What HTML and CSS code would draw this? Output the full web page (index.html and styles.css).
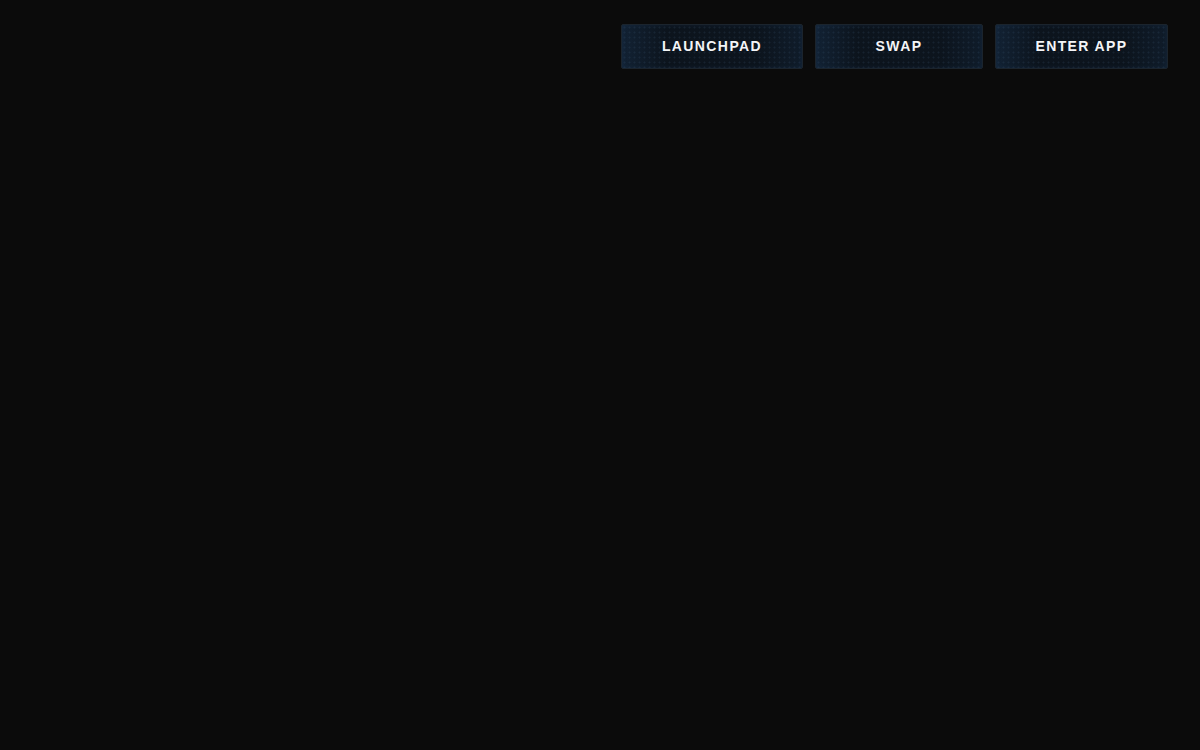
FILE: index.html
```html
<!DOCTYPE html>
<html>
<head>
<meta charset="utf-8">
<link rel="stylesheet" href="styles.css">
</head>
<body>
<header class="topbar">
  <nav class="nav">
    <a class="btn btn-launchpad">LAUNCHPAD</a>
    <a class="btn btn-swap">SWAP</a>
    <a class="btn btn-enter">ENTER APP</a>
  </nav>
</header>
</body>
</html>
```
FILE: styles.css
```css
html, body {
  margin: 0;
  padding: 0;
  background: #0b0b0b;
  height: 100%;
}
body {
  font-family: "Liberation Sans", Arial, sans-serif;
}
.topbar {
  display: flex;
  justify-content: flex-end;
  padding: 24px 32px 0 0;
}
.nav {
  display: flex;
  gap: 12px;
}
.btn {
  box-sizing: border-box;
  height: 45px;
  padding-bottom: 2px;
  display: flex;
  align-items: center;
  justify-content: center;
  color: #f4f5f7;
  font-weight: 700;
  font-size: 14px;
  letter-spacing: 1.4px;
  border: 1px solid #1b242d;
  border-radius: 2px;
  background-color: #0c141d;
  background-image:
    radial-gradient(circle, rgba(60, 90, 120, 0.2) 0.8px, transparent 1.2px),
    linear-gradient(90deg, rgba(30, 60, 95, 0.35), rgba(12, 20, 29, 0) 25%, rgba(12, 20, 29, 0) 75%, rgba(30, 60, 95, 0.2));
  background-size: 5px 5px, 100% 100%;
  box-shadow: inset 0 0 5px rgba(40, 80, 120, 0.2);
  cursor: pointer;
}
.btn-launchpad { width: 182px; }
.btn-swap { width: 168px; }
.btn-enter { width: 173px; }
```
